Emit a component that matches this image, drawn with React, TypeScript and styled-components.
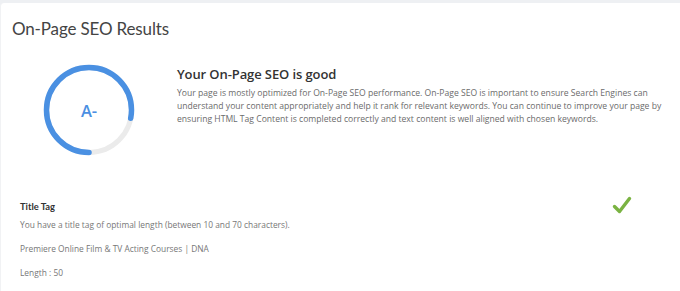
import React from "react";
import styled, { createGlobalStyle } from "styled-components";

const Global = createGlobalStyle`
  html, body { margin: 0; padding: 0; background: #ffffff; }
  body { font-family: "Open Sans", "Noto Sans", sans-serif; }
  * { box-sizing: border-box; }
`;

const Page = styled.div`
  width: 680px;
  height: 291px;
  background: #eef0f3;
  padding-top: 3px;
  overflow: hidden;
`;

const Card = styled.div`
  background: #ffffff;
  height: 288px;
  border-top-left-radius: 4px;
  border-left: 1px solid #f1f2f4;
`;

const Title = styled.h1`
  margin: 0;
  padding: 13px 0 0 11px;
  font-family: "Lato", "Open Sans", sans-serif;
  font-weight: 400;
  font-size: 17px;
  letter-spacing: -0.15px;
  line-height: 26px;
  color: #444;
`;

const Summary = styled.div`
  display: flex;
  align-items: flex-start;
  padding: 22px 0 0 41px;
`;

const Gauge = styled.div`
  position: relative;
  width: 94px;
  height: 94px;
  flex: none;
  margin-top: -1px;
`;

const Grade = styled.span`
  position: absolute;
  inset: 0;
  display: flex;
  align-items: center;
  justify-content: center;
  font-family: "Open Sans", sans-serif;
  font-weight: 600;
  font-size: 16.5px;
  color: #4a8fe2;
`;

const SummaryText = styled.div`
  margin-left: 41px;
  width: 490px;
`;

const Heading = styled.h2`
  margin: 0;
  font-family: "Open Sans", sans-serif;
  font-weight: 600;
  font-size: 13px;
  line-height: 20px;
  color: #333;
  letter-spacing: -0.1px;
`;

const Paragraph = styled.p`
  margin: 3px 0 0;
  font-size: 8.6px;
  line-height: 13px;
  color: #6b6b6b;
`;

const Section = styled.div`
  display: flex;
  justify-content: space-between;
  padding: 43px 0 0 19px;
`;

const SectionBody = styled.div`
  display: flex;
  flex-direction: column;
`;

const SectionTitle = styled.div`
  font-family: "Lato", "Open Sans", sans-serif;
  font-size: 9.4px;
  font-weight: 700;
  line-height: 14px;
  color: #333;
`;

const Line = styled.div<{ $gap: number }>`
  margin-top: ${(p) => p.$gap}px;
  font-size: 8.4px;
  line-height: 13px;
  color: #777;
`;

const Check = styled.svg`
  margin: -4px 48px 0 0;
  flex: none;
`;

export default function App() {
  const r = 42.5;
  const c = 2 * Math.PI * r;
  const frac = 0.78;
  return (
    <>
      <Global />
      <Page>
        <Card>
          <Title>On-Page SEO Results</Title>
          <Summary>
            <Gauge>
              <svg width="94" height="94" viewBox="0 0 94 94">
                <circle cx="47" cy="47" r={r} fill="none" stroke="#ebebeb" strokeWidth="5" />
                <circle
                  cx="47"
                  cy="47"
                  r={r}
                  fill="none"
                  stroke="#4a90e2"
                  strokeWidth="5.5"
                  strokeLinecap="round"
                  strokeDasharray={`${c * frac} ${c}`}
                  transform="rotate(90 47 47)"
                />
              </svg>
              <Grade>A-</Grade>
            </Gauge>
            <SummaryText>
              <Heading>Your On-Page SEO is good</Heading>
              <Paragraph>
                Your page is mostly optimized for On-Page SEO performance. On-Page SEO is important to ensure Search Engines can understand your content appropriately and help it rank for relevant keywords. You can continue to improve your page by ensuring HTML Tag Content is completed correctly and text content is well aligned with chosen keywords.
              </Paragraph>
            </SummaryText>
          </Summary>
          <Section>
            <SectionBody>
              <SectionTitle>Title Tag</SectionTitle>
              <Line $gap={4}>You have a title tag of optimal length (between 10 and 70 characters).</Line>
              <Line $gap={11}>Premiere Online Film &amp; TV Acting Courses | DNA</Line>
              <Line $gap={11}>Length : 50</Line>
            </SectionBody>
            <Check width="20" height="18" viewBox="0 0 20 18">
              <path d="M2.5 10.5 L7.5 15.5 L17.5 2.5" fill="none" stroke="#7ab342" strokeWidth="3.4" strokeLinecap="round" strokeLinejoin="round" />
            </Check>
          </Section>
        </Card>
      </Page>
    </>
  );
}
